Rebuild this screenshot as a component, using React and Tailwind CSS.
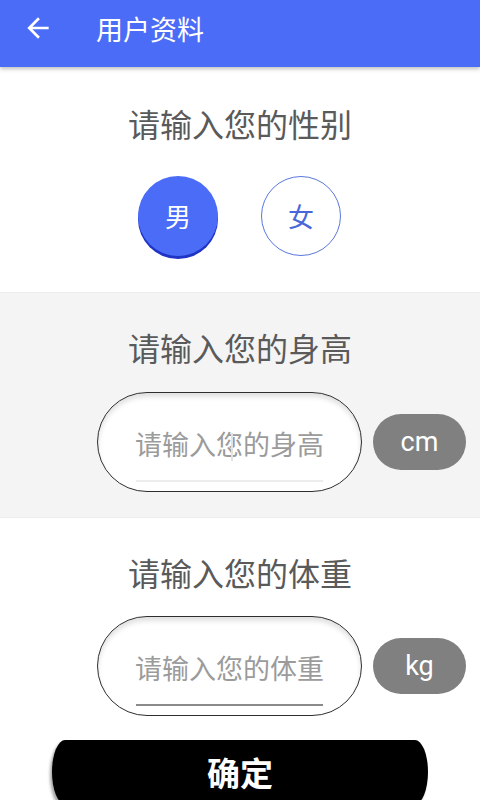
import React from 'react';

// --- fonts & small bits ---
const CJK = { fontFamily: '"Noto Sans CJK SC", "Noto Sans", sans-serif' };
const LAT = { fontFamily: 'Roboto, "Noto Sans CJK SC", sans-serif' };

function BackArrow() {
  return (
    <svg width="32" height="32" viewBox="0 0 24 24" fill="white">
      <path d="M20 11H7.83l5.59-5.59L12 4l-8 8 8 8 1.41-1.41L7.83 13H20v-2z" />
    </svg>
  );
}

// Pill input + unit button
function MeasureRow({ placeholder, unit, focused, cursor }) {
  return (
    <div className="flex items-center pl-[97px] gap-[11px]">
      <div className="relative w-[265px] h-[100px] rounded-full border-[1.5px] border-[#2e2e2e] bg-white shadow-[inset_0_4px_5px_rgba(0,0,0,0.12)] flex flex-col items-center">
        <div className={`mt-[26px] w-[187px] h-[63px] flex items-start justify-center pt-[7px] border-b-2 ${focused ? 'border-[#8a8a8a]' : 'border-[#ececec]'}`}>
          <span className="text-[27px] leading-[36px] text-[#9b9b9b] whitespace-nowrap" style={CJK}>{placeholder}</span>
        </div>
        {cursor && <span className="absolute left-[133px] top-[40px] w-[2px] h-[28px] bg-[#e2e2e2]" />}
      </div>
      <div className="w-[93px] h-[56px] rounded-full bg-[#808080] flex items-center justify-center">
        <span className="text-[27px] text-white leading-none" style={LAT}>{unit}</span>
      </div>
    </div>
  );
}

export default function App() {
  return (
    <div className="w-[480px] min-h-screen bg-white" style={CJK}>
      {/* Header */}
      <header className="relative z-10 h-[67px] bg-[#4b6cf6] flex items-center shadow-[0_2px_4px_rgba(0,0,0,0.25)]">
        <div className="ml-[22px] mb-[12px]"><BackArrow /></div>
        <h1 className="ml-[42px] mb-[10px] text-[27px] text-white leading-none">用户资料</h1>
      </header>

      {/* Gender */}
      <section className="h-[225px] bg-white flex flex-col items-center">
        <h2 className="mt-[36px] text-[32px] leading-[40px] text-[#5a5a5a]">请输入您的性别</h2>
        <div className="mt-[33px] flex gap-[43px] pr-[1px]">
          <div className="w-[80px] h-[80px] rounded-full bg-[#4a6cf7] shadow-[0_3px_0_#1f33c4] flex items-center justify-center">
            <span className="text-[26px] text-white leading-none">男</span>
          </div>
          <div className="w-[80px] h-[80px] rounded-full border border-[#5a78dc] bg-white flex items-center justify-center">
            <span className="text-[26px] text-[#4a66d8] leading-none">女</span>
          </div>
        </div>
      </section>

      {/* Height */}
      <section className="h-[225px] bg-[#f4f4f4] border-t border-[#ebebeb] flex flex-col">
        <h2 className="mt-[34px] text-center text-[32px] leading-[40px] text-[#5a5a5a]">请输入您的身高</h2>
        <div className="mt-[25px]">
          <MeasureRow placeholder="请输入您的身高" unit="cm" cursor />
        </div>
      </section>

      {/* Weight */}
      <section className="bg-white border-t border-[#ececec] flex flex-col">
        <h2 className="mt-[34px] text-center text-[32px] leading-[40px] text-[#5a5a5a]">请输入您的体重</h2>
        <div className="mt-[24px]">
          <MeasureRow placeholder="请输入您的体重" unit="kg" focused />
        </div>
        <div className="mt-[24px] flex justify-center pb-6">
          <button className="w-[376px] h-[64px] rounded-[18px/44px] bg-black shadow-[-2px_3px_3px_rgba(0,0,0,0.35)] flex items-center justify-center">
            <span className="text-[33px] font-bold text-white leading-none" style={CJK}>确定</span>
          </button>
        </div>
      </section>
    </div>
  );
}
